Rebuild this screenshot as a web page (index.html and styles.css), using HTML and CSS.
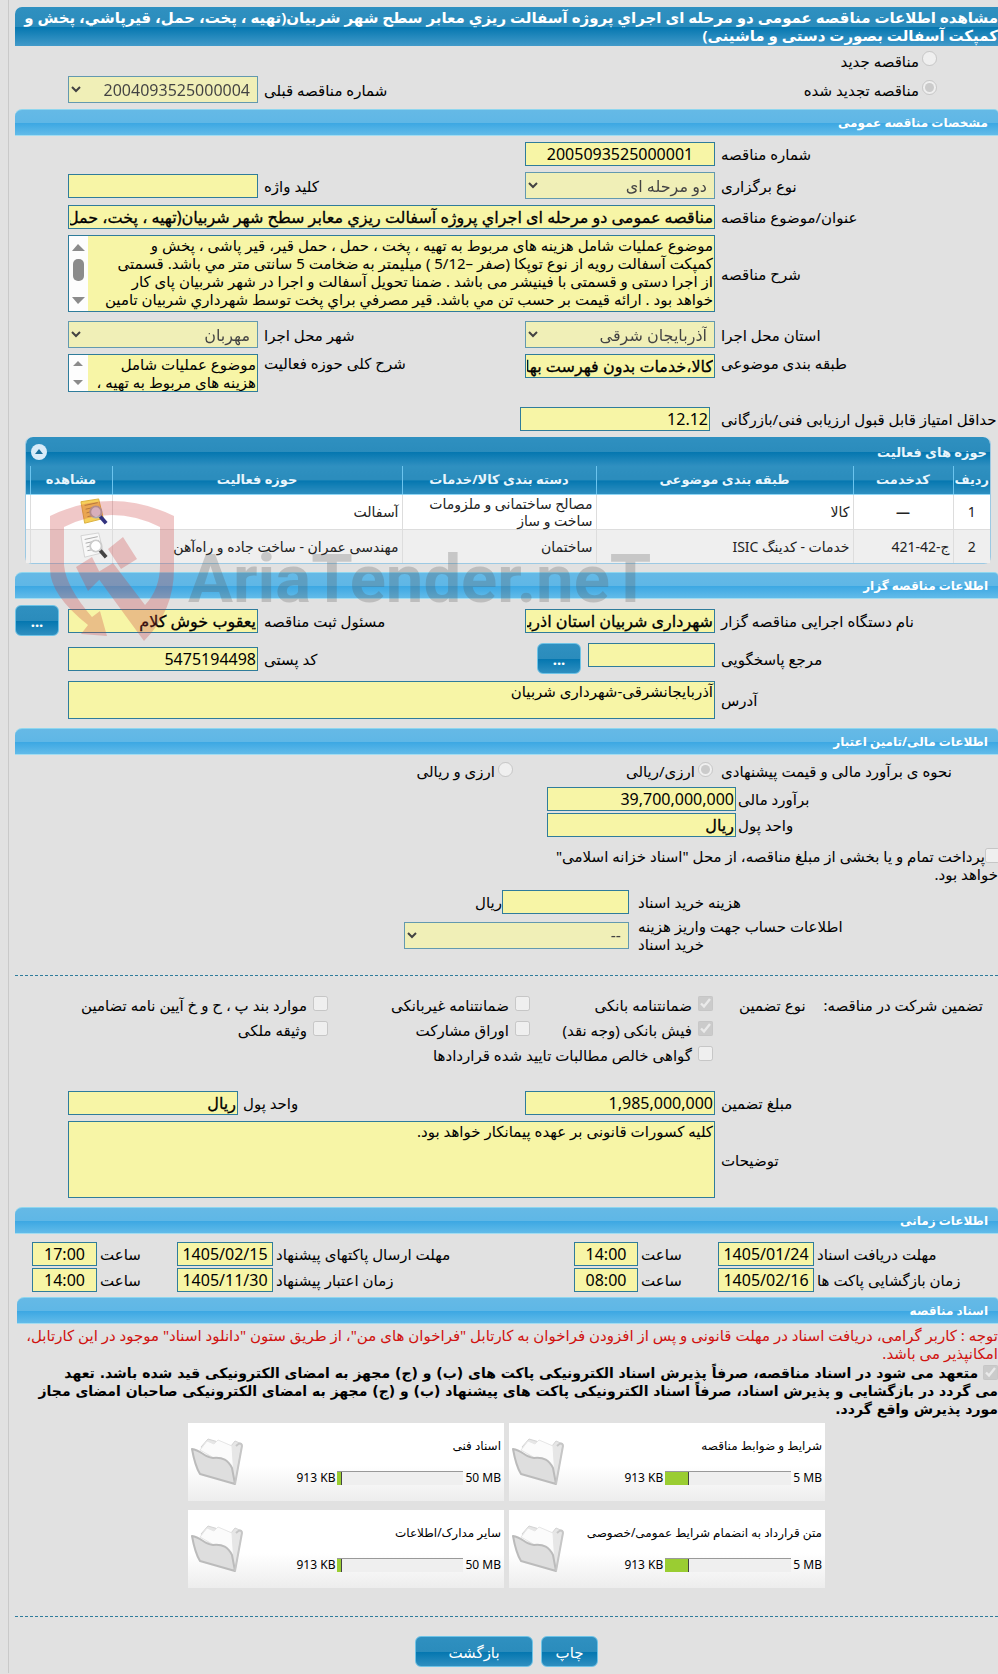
FILE: index.html
```html
<!DOCTYPE html>
<html lang="fa" dir="rtl">
<head>
<meta charset="utf-8">
<meta name="viewport" content="width=device-width, initial-scale=1.0">
<title>مشاهده اطلاعات مناقصه عمومی</title>
<link rel="stylesheet" href="styles.css">
</head>
<body>
<svg class="defs" aria-hidden="true">
	<symbol id="folder" viewBox="0 0 52 48">
		<path d="M10 9 L17 1 L34 6 L40 8 L44 3 L51 6 L50 12 L44 46 L36 40 Z" fill="#e6e6e6" stroke="#d4d4d4"/>
		<path d="M9 12 L16 3 L23 6 L27 2 L41 8 L43 38 L30 24 Z" fill="#fbfbfb" stroke="#e6e6e6"/>
		<path d="M1 11 C10 12 14 20 22 20 C32 19 37 22 41 30 L44 46 L9 36 Q4 28 1 11 Z" fill="#dedede" stroke="#bbb" stroke-width="2" stroke-linejoin="round"/>
		<path d="M45 8 Q50 3 51 8 L44 46" fill="none" stroke="#c6c6c6" stroke-width="2"/>
	</symbol>
	<symbol id="lookup" viewBox="0 0 32 30">
		<path class="sheet" d="M2 4 L21 1 L26 22 L6 27 Z"/>
		<path d="M6 8 L20 5 M7 12 L21 9 M8 16 L15 14 M9 20 L14 19" stroke="#a98b3c" fill="none"/>
		<path d="M22 19 L29 27" stroke="#33337f" stroke-width="4"/>
		<circle cx="18" cy="15" r="6" fill="#dde" stroke="#aaa" stroke-width="2"/>
	</symbol>
</svg>
<div class="panel">
	<h1 class="title">مشاهده اطلاعات مناقصه عمومی دو مرحله ای اجراي پروژه آسفالت ریزي معابر سطح شهر شربیان(تهیه ، پخت، حمل، قیرپاشي، پخش و<br>کمپکت آسفالت بصورت دستی و ماشینی)</h1>
	<div class="kind">
		<label class="pick"><input type="radio" name="kind" disabled>مناقصه جدید</label>
	</div>
	<div class="grid kind-row">
		<label class="pick wide2"><input type="radio" name="kind" checked disabled>مناقصه تجدید شده</label>
		<label class="lbl" for="prev">شماره مناقصه قبلی</label>
		<select id="prev" disabled><option>2004093525000004</option></select>
	</div>

	<h2 class="bar">مشخصات مناقصه عمومی</h2>
	<div class="grid rows">
		<label class="lbl" for="no">شماره مناقصه</label>
		<input class="center" type="text" id="no" value="2005093525000001" readonly>
		<label class="lbl new" for="type">نوع برگزاری</label>
		<select id="type" disabled><option>دو مرحله ای</option></select>
		<label class="lbl" for="keyword">کلید واژه</label>
		<input type="text" id="keyword" readonly>
		<label class="lbl new" for="subject">عنوان/موضوع مناقصه</label>
		<input class="strong wide3" type="text" id="subject" value="مناقصه عمومی دو مرحله ای اجراي پروژه آسفالت ریزي معابر سطح شهر شربیان(تهیه ، پخت، حمل، قیرپاشي" readonly>
		<label class="lbl new" for="desc">شرح مناقصه</label>
		<div class="scroll wide3">
			<textarea id="desc" rows="4" readonly>موضوع عملیات شامل هزینه های مربوط به تهیه ، پخت ، حمل ، حمل قیر، قیر پاشی ، پخش و
کمپکت آسفالت رویه از نوع توپکا (صفر –5/12 ) میلیمتر به ضخامت 5 سانتی متر مي باشد. قسمتی
از اجرا دستی و قسمتی با فینیشر می باشد . ضمنا تحویل آسفالت و اجرا در شهر شربیان پای کار
خواهد بود . ارائه قیمت بر حسب تن مي باشد. قیر مصرفي براي پخت توسط شهرداري شربیان تامین</textarea>
			<svg width="19" height="75" viewBox="0 0 19 75" fill="#8b8b8b" aria-hidden="true"><path d="M3 15 L9 8 L16 15 Z M3 61 L9 68 L16 61 Z"/><rect x="4" y="23" width="11" height="22" rx="5"/></svg>
		</div>
	</div>
	<div class="grid rows after-desc">
		<label class="lbl" for="province">استان محل اجرا</label>
		<select id="province" disabled><option>آذربایجان شرقی</option></select>
		<label class="lbl" for="city">شهر محل اجرا</label>
		<select id="city" disabled><option>مهربان</option></select>
		<label class="lbl new top" for="category">طبقه بندی موضوعی</label>
		<input class="strong top" type="text" id="category" value="کالا،خدمات بدون فهرست بها" readonly>
		<label class="lbl top" for="scope">شرح کلی حوزه فعالیت</label>
		<div class="scroll">
			<textarea id="scope" rows="2" readonly>موضوع عملیات شامل
هزینه های مربوط به تهیه ،</textarea>
			<svg width="19" height="36" viewBox="0 0 19 36" fill="#8b8b8b" aria-hidden="true"><path d="M4 11 L9 6 L14 11 Z M4 25 L9 30 L14 25 Z"/></svg>
		</div>
	</div>
	<div class="grid score">
		<label class="lbl" for="score">حداقل امتیاز قابل قبول ارزیابی فنی/بازرگانی</label>
		<input type="text" id="score" value="12.12" readonly>
	</div>

	<div class="activity">
		<div class="activity-head">
			<span>حوزه های فعالیت</span>
			<button class="fold" type="button" aria-label="بستن"><svg width="16" height="16" viewBox="0 0 16 16"><circle cx="8" cy="8" r="8" fill="#d8ebf8"/><path d="M4 10 L8 5 L12 10 Z" fill="#1a6f9c"/></svg></button>
		</div>
		<table>
			<colgroup><col class="c1"><col class="c2"><col class="c3"><col class="c4"><col class="c5"><col class="c6"><col class="c7"></colgroup>
			<tr><th>ردیف</th><th>کدخدمت</th><th>طبقه بندی موضوعی</th><th>دسته بندی کالا/خدمات</th><th>حوزه فعالیت</th><th>مشاهده</th><th></th></tr>
			<tr><td class="mid">1</td><td class="mid dash">—</td><td>کالا</td><td>مصالح ساختمانی و ملزومات<br>ساخت و ساز</td><td>آسفالت</td><td><svg class="note" width="30" height="28"><use href="#lookup"/></svg></td><td></td></tr>
			<tr class="alt"><td class="mid">2</td><td>ج-42-421</td><td>خدمات - کدینگ ISIC</td><td>ساختمان</td><td>مهندسی عمران - ساخت جاده و راه‌آهن</td><td><svg class="note off" width="30" height="28"><use href="#lookup"/></svg></td><td></td></tr>
		</table>
		<svg class="mark" width="620" height="142" viewBox="0 0 620 142" aria-hidden="true">
			<g fill="#cc3c3c" opacity="0.28">
				<path d="M8 17 Q70 -13 132 17 V70 Q132 112 102 142 L53 75 L71 64 L103 106 Q118 90 118 66 V28 Q70 4 22 28 V66 Q24 88 50 118 L58 112 L65 137 L39 135 L46 126 Q8 96 8 70 Z"/>
				<path d="M66 50 L81 38 L95 60 L79 70 Z M34 68 L50 58 L60 78 L46 92 Z"/>
			</g>
			<text x="146" y="103">AriaTender.neT</text>
		</svg>
	</div>

	<h2 class="bar">اطلاعات مناقصه گزار</h2>
	<div class="grid owner">
		<label class="lbl" for="org">نام دستگاه اجرایی مناقصه گزار</label>
		<input class="strong" type="text" id="org" value="شهرداری شربیان استان اذربایجان" readonly>
		<label class="lbl" for="resp">مسئول ثبت مناقصه</label>
		<input class="strong" type="text" id="resp" value="یعقوب خوش کلام" readonly>
		<button class="btn more last" type="button">...</button>
		<label class="lbl new" for="contact">مرجع پاسخگویی</label>
		<div class="with-btn"><input type="text" id="contact" readonly><button class="btn more" type="button">...</button></div>
		<label class="lbl" for="zip">کد پستی</label>
		<input type="text" id="zip" value="5475194498" readonly>
		<label class="lbl new" for="addr">آدرس</label>
		<textarea class="box wide3" id="addr" rows="2" readonly>آذربایجانشرقی-شهرداری شربیان</textarea>
	</div>

	<h2 class="bar">اطلاعات مالی/تامین اعتبار</h2>
	<div class="grid estimate">
		<span class="lbl">نحوه ی برآورد مالی و قیمت پیشنهادی</span>
		<div class="methods wide3">
			<label class="pick"><input type="radio" name="method" checked disabled>ارزی/ریالی</label>
			<label class="pick"><input type="radio" name="method" disabled>ارزی و ریالی</label>
		</div>
	</div>
	<div class="money">
		<label class="lbl" for="est">برآورد مالی</label>
		<input type="text" id="est" value="39,700,000,000" readonly>
		<label class="lbl" for="unit">واحد پول</label>
		<input class="strong" type="text" id="unit" value="ریال" readonly>
	</div>
	<label class="treasury"><input type="checkbox" disabled>پرداخت تمام و یا بخشی از مبلغ مناقصه، از محل "اسناد خزانه اسلامی"<br>خواهد بود.</label>
	<div class="cost">
		<label class="lbl" for="fee">هزینه خرید اسناد</label>
		<div class="fee"><input type="text" id="fee" readonly><span>ریال</span></div>
		<label class="lbl" for="account">اطلاعات حساب جهت واریز هزینه<br>خرید اسناد</label>
		<select id="account" disabled><option>--</option></select>
	</div>
	<hr>
	<div class="guarantee">
		<span>تضمین شرکت در مناقصه:</span>
		<span class="lbl">نوع تضمین</span>
		<div class="checks">
			<label class="pick"><input type="checkbox" checked disabled>ضمانتنامه بانکی</label>
			<label class="pick"><input type="checkbox" disabled>ضمانتنامه غیربانکی</label>
			<label class="pick"><input type="checkbox" disabled>موارد بند پ ، ح و خ آیین نامه تضامین</label>
			<label class="pick"><input type="checkbox" checked disabled>فیش بانکی (وجه نقد)</label>
			<label class="pick"><input type="checkbox" disabled>اوراق مشارکت</label>
			<label class="pick"><input type="checkbox" disabled>وثیقه ملکی</label>
			<label class="pick wide2"><input type="checkbox" disabled>گواهی خالص مطالبات تایید شده قراردادها</label>
		</div>
	</div>
	<div class="grid rows amount">
		<label class="lbl" for="amount">مبلغ تضمین</label>
		<input type="text" id="amount" value="1,985,000,000" readonly>
		<div class="unit wide2">
			<label for="unit2">واحد پول</label>
			<input class="strong" type="text" id="unit2" value="ریال" readonly>
		</div>
		<label class="lbl new" for="notes">توضیحات</label>
		<textarea class="box notes wide3" id="notes" rows="4" readonly>کلیه کسورات قانونی بر عهده پیمانکار خواهد بود.</textarea>
	</div>

	<h2 class="bar">اطلاعات زمانی</h2>
	<div class="times">
		<label class="lbl" for="d1">مهلت دریافت اسناد</label><input type="text" id="d1" value="1405/01/24" readonly>
		<label class="lbl" for="t1">ساعت</label><input type="text" id="t1" value="14:00" readonly>
		<label class="lbl" for="d2">مهلت ارسال پاکتهای پیشنهاد</label><input type="text" id="d2" value="1405/02/15" readonly>
		<label class="lbl" for="t2">ساعت</label><input type="text" id="t2" value="17:00" readonly>
		<label class="lbl new" for="d3">زمان بازگشایی پاکت ها</label><input type="text" id="d3" value="1405/02/16" readonly>
		<label class="lbl" for="t3">ساعت</label><input type="text" id="t3" value="08:00" readonly>
		<label class="lbl" for="d4">زمان اعتبار پیشنهاد</label><input type="text" id="d4" value="1405/11/30" readonly>
		<label class="lbl" for="t4">ساعت</label><input type="text" id="t4" value="14:00" readonly>
	</div>

	<h2 class="bar docs-bar">اسناد مناقصه</h2>
	<p class="warn">توجه : کاربر گرامی، دریافت اسناد در مهلت قانونی و پس از افزودن فراخوان به کارتابل "فراخوان های من"، از طریق ستون "دانلود اسناد" موجود در این کارتابل،<br>امکانپذیر می باشد.</p>
	<label class="pledge"><input type="checkbox" checked disabled> متعهد می شود در اسناد مناقصه، صرفاً پذیرش اسناد الکترونیکی پاکت های (ب) و (ج) مجهز به امضای الکترونیکی قید شده باشد. تعهد<br>می گردد در بازگشایی و پذیرش اسناد، صرفاً اسناد الکترونیکی پاکت های پیشنهاد (ب) و (ج) مجهز به امضای الکترونیکی صاحبان امضای مجاز<br>مورد پذیرش واقع گردد.</label>
	<div class="docs">
		<div class="doc">
			<div class="doc-body"><h3>شرایط و ضوابط مناقصه</h3><div class="usage"><span dir="ltr">5 MB</span><div class="track"><i style="width:19%"></i></div><span dir="ltr">913 KB</span></div></div>
			<svg width="52" height="48"><use href="#folder"/></svg>
		</div>
		<div class="doc">
			<div class="doc-body"><h3>اسناد فنی</h3><div class="usage"><span dir="ltr">50 MB</span><div class="track"><i style="width:4%"></i></div><span dir="ltr">913 KB</span></div></div>
			<svg width="52" height="48"><use href="#folder"/></svg>
		</div>
		<div class="doc">
			<div class="doc-body"><h3>متن قرارداد به انضمام شرایط عمومی/خصوصی</h3><div class="usage"><span dir="ltr">5 MB</span><div class="track"><i style="width:19%"></i></div><span dir="ltr">913 KB</span></div></div>
			<svg width="52" height="48"><use href="#folder"/></svg>
		</div>
		<div class="doc">
			<div class="doc-body"><h3>سایر مدارک/اطلاعات</h3><div class="usage"><span dir="ltr">50 MB</span><div class="track"><i style="width:4%"></i></div><span dir="ltr">913 KB</span></div></div>
			<svg width="52" height="48"><use href="#folder"/></svg>
		</div>
	</div>
	<hr>
	<div class="actions">
		<button class="btn print" type="button">چاپ</button>
		<button class="btn back" type="button">بازگشت</button>
	</div>
</div>
</body>
</html>
```
FILE: styles.css
```css
* {
	box-sizing: border-box;
}
body {
	margin: 0;
	background-color: #e1e1e1;
	font-family: Tahoma, "Noto Sans", "DejaVu Sans", sans-serif;
	font-size: 15px;
	line-height: 18px;
	color: #000;
}
.defs {
	display: block;
	width: 0;
	height: 0;
}
.panel {
	margin-left: 8px;
	padding: 7px 0 6px 6px;
	border-left: 1px solid #c9c9c9;
}
.title {
	margin: 0;
	padding: 1px 0 2px;
	font-size: 15px;
	line-height: 18px;
	color: #fff;
	white-space: nowrap;
	background: linear-gradient(#2f90c0, #2b8cbc 50%, #0577b0 52%, #429ac9);
	border-radius: 7px 0 0 0;
}
.bar {
	margin: 0;
	height: 27px;
	padding: 0 10px;
	font-size: 12px;
	line-height: 25px;
	color: #fff;
	background: linear-gradient(#65b9e6, #5fb7e6 50%, #3da8e3 54%, #62bbe9);
	border-top: 1px solid #8fd6ee;
	border-bottom: 1px solid #a3dcf0;
	border-radius: 7px 4px 0 0;
}

/* fields */
.grid {
	display: grid;
	grid-template-columns: 283fr 190fr 267fr 190fr 53fr;
	align-items: center;
}
.lbl {
	text-align: left;
	padding-left: 6px;
	white-space: nowrap;
}
.new {
	grid-column-start: 1;
}
.top {
	align-self: start;
}
.wide2 {
	grid-column: span 2;
}
.wide3 {
	grid-column: span 3;
}
input, select, textarea {
	font-family: inherit;
	color: #000;
}
input[type=text], select, .box, .scroll {
	width: 100%;
	min-width: 0;
	margin: 0;
	background-color: #f7f5a6;
	border: 1px solid #2f7c9b;
	border-radius: 0;
}
input[type=text] {
	height: 24px;
	padding: 1px;
	font-size: 16px;
}
input[type=text].strong {
	-webkit-text-stroke: 0.3px #000;
}
input.center {
	text-align: center;
}
select {
	height: 27px;
	padding: 0 3px;
	font-size: 16px;
}
select:disabled {
	opacity: 0.7;
	color: #000;
}
textarea {
	display: block;
	resize: none;
	overflow: hidden;
	padding: 0 1px;
	font-size: 15px;
	line-height: 18px;
}
.notes {
	min-height: 77px;
}
.scroll {
	display: flex;
}
.scroll textarea {
	flex: 1;
	min-width: 0;
	margin: 0;
	border: 0;
	background: none;
}
.scroll svg {
	flex: none;
	background-color: #fdfdfd;
}
.pick {
	display: flex;
	align-items: center;
	white-space: nowrap;
}
input[type=radio], input[type=checkbox] {
	flex: none;
	width: 15px;
	height: 15px;
	margin: 0 0 4px 3px;
}

.kind {
	padding: 5px 61px 5px 0;
}
.kind-row {
	margin: 1px 0 6px;
}
.kind-row .pick {
	padding-right: 61px;
}
.rows {
	row-gap: 6px;
	padding: 6px 0;
}
.after-desc {
	padding: 3px 0 0;
}
.score {
	padding: 15px 0 6px;
}
.score input {
	position: relative;
	right: 5px;
}

/* activity table */
.activity {
	position: relative;
	margin: 0 7px 8px 10px;
	border: 1px solid #9cc9e3;
	border-top: 0;
	border-radius: 7px;
	background-color: #fff;
}
.activity-head {
	display: flex;
	justify-content: space-between;
	align-items: center;
	height: 29px;
	padding: 0 3px 0 5px;
	font-size: 13px;
	font-weight: bold;
	color: #e8f5fc;
	background: linear-gradient(#2f90c0, #2b8cbc 50%, #0577b0 53%, #2f8fc0);
	border-radius: 7px 7px 0 0;
}
.fold {
	padding: 0;
	border: 0;
	background: none;
	line-height: 0;
}
.activity table {
	width: 100%;
	table-layout: fixed;
	border-collapse: collapse;
	font-size: 14px;
	line-height: 17px;
	color: #222;
}
.c1 { width: 37px; }
.c2 { width: 100px; }
.c3 { width: 257px; }
.c4 { width: 194px; }
.c6 { width: 82px; }
.c7 { width: 4px; }
.activity th {
	height: 28px;
	padding: 0;
	font-size: 13px;
	color: #e8f5fc;
	background: linear-gradient(#2f90c0, #2b8cbc 50%, #0577b0 53%, #2f8fc0);
	border-left: 1px solid #6cc4ee;
	border-bottom: 1px solid #8fd6f4;
}
.activity td {
	height: 35px;
	padding: 0 3px;
	border-left: 1px solid #ddd;
}
.activity tr :last-child {
	padding: 0;
	border-left: 0;
}
.activity td.mid {
	text-align: center;
}
.activity .dash {
	font-weight: bold;
}
.activity .alt td {
	height: 34px;
	background-color: #efefef;
	border-top: 1px solid #ddd;
}
.note {
	display: block;
}
.sheet {
	fill: #f6cf5a;
	stroke: #d9ae3a;
}
.off {
	filter: grayscale(1) brightness(1.2);
}
.mark {
	position: absolute;
	left: 16px;
	top: 62px;
	pointer-events: none;
	direction: ltr;
}
.mark text {
	font: bold 67px Roboto, "Liberation Sans", sans-serif;
	fill: #555;
	opacity: 0.25;
}

/* buttons */
.btn {
	height: 31px;
	padding: 0;
	font-family: inherit;
	font-size: 15px;
	color: #fff;
	background: linear-gradient(#2f90c0, #2b8cbc 50%, #0577b0 53%, #2f8fc0);
	border: 1px solid #6fc3e6;
	border-radius: 6px;
}
.more {
	width: 44px;
	font-weight: bold;
}
.last {
	justify-self: end;
}
.owner {
	row-gap: 7px;
	padding: 6px 0 9px;
}
.with-btn {
	display: flex;
	align-items: flex-start;
	gap: 7px;
}
.with-btn input[type=text] {
	width: 127px;
}

/* money */
.estimate {
	height: 32px;
}
.methods {
	display: grid;
	grid-template-columns: 200px 200px;
	padding-right: 2px;
}
.money {
	display: grid;
	grid-template-columns: 262fr 189fr 532fr;
	row-gap: 2px;
	align-items: center;
}
.money .lbl {
	grid-column: 1;
	padding-left: 2px;
}
.treasury {
	display: block;
	margin: 10px 0 7px;
}
.treasury input, .pledge input {
	vertical-align: middle;
	margin: -4px 0 0;
}
.treasury input {
	margin-right: -2px;
}
.cost {
	display: grid;
	grid-template-columns: 369fr 225fr 389fr;
	row-gap: 3px;
	align-items: center;
}
.cost .lbl {
	grid-column: 1;
	padding-left: 9px;
}
.fee {
	display: flex;
	align-items: center;
}
.fee input[type=text] {
	width: 127px;
}
hr {
	margin: 22px 0 17px;
	border: 0;
	border-top: 1px dashed #2f7c9b;
}
.guarantee {
	display: grid;
	grid-template-columns: 178fr 91fr 714fr;
	line-height: 25px;
}
.guarantee > :first-child {
	padding-right: 15px;
	white-space: nowrap;
}
.guarantee .lbl {
	padding-left: 10px;
}
.checks {
	display: grid;
	grid-template-columns: 183px 202px 1fr;
	padding-right: 16px;
}
.checks input[type=checkbox] {
	margin-left: 6px;
}
.amount {
	margin-top: 17px;
	padding-bottom: 9px;
}
.unit {
	display: flex;
	align-items: center;
	justify-content: flex-end;
	gap: 5px;
}
.unit input[type=text] {
	width: 170px;
}
.amount + .bar, .docs-bar {
	margin-bottom: 1px;
}

/* dates */
.times {
	display: grid;
	grid-template-columns: 184fr 96fr 80fr 64fr 301fr 96fr 80fr 65fr 17fr;
	row-gap: 2px;
	align-items: center;
	padding: 7px 0 5px;
}
.times .lbl {
	padding-left: 3px;
}
.times input[type=text] {
	text-align: center;
}

/* documents */
.docs-bar {
	margin-left: 2px;
}
.warn {
	margin: 2px 0;
	color: #d0120f;
}
.warn, .pledge {
	white-space: nowrap;
}
.pledge {
	display: block;
	font-family: Tahoma, "DejaVu Sans", sans-serif;
	font-size: 14px;
	font-weight: bold;
}
.docs {
	display: grid;
	grid-template-columns: 316px 316px;
	gap: 9px 5px;
	justify-content: center;
	margin: 5px 0 0;
}
.doc {
	display: flex;
	align-items: center;
	justify-content: space-between;
	height: 78px;
	padding: 0 3px;
	font-size: 12px;
	background: linear-gradient(#fff 55%, #ededed);
}
.doc h3 {
	margin: 0 0 16px;
	font-size: 12px;
	line-height: 16px;
	font-weight: normal;
	white-space: nowrap;
}
.usage {
	display: flex;
	align-items: center;
	gap: 2px;
	line-height: 16px;
}
.track {
	width: 126px;
	height: 14px;
	background-color: #efefef;
	border-top: 1px solid #999;
	direction: ltr;
}
.track i {
	display: block;
	height: 100%;
	background-color: #9acd32;
	border-right: 1px solid #444;
}
.docs + hr {
	margin: 28px 0 19px;
}
.actions {
	display: flex;
	justify-content: center;
	gap: 8px;
}
.print {
	width: 57px;
}
.back {
	width: 118px;
}
```
